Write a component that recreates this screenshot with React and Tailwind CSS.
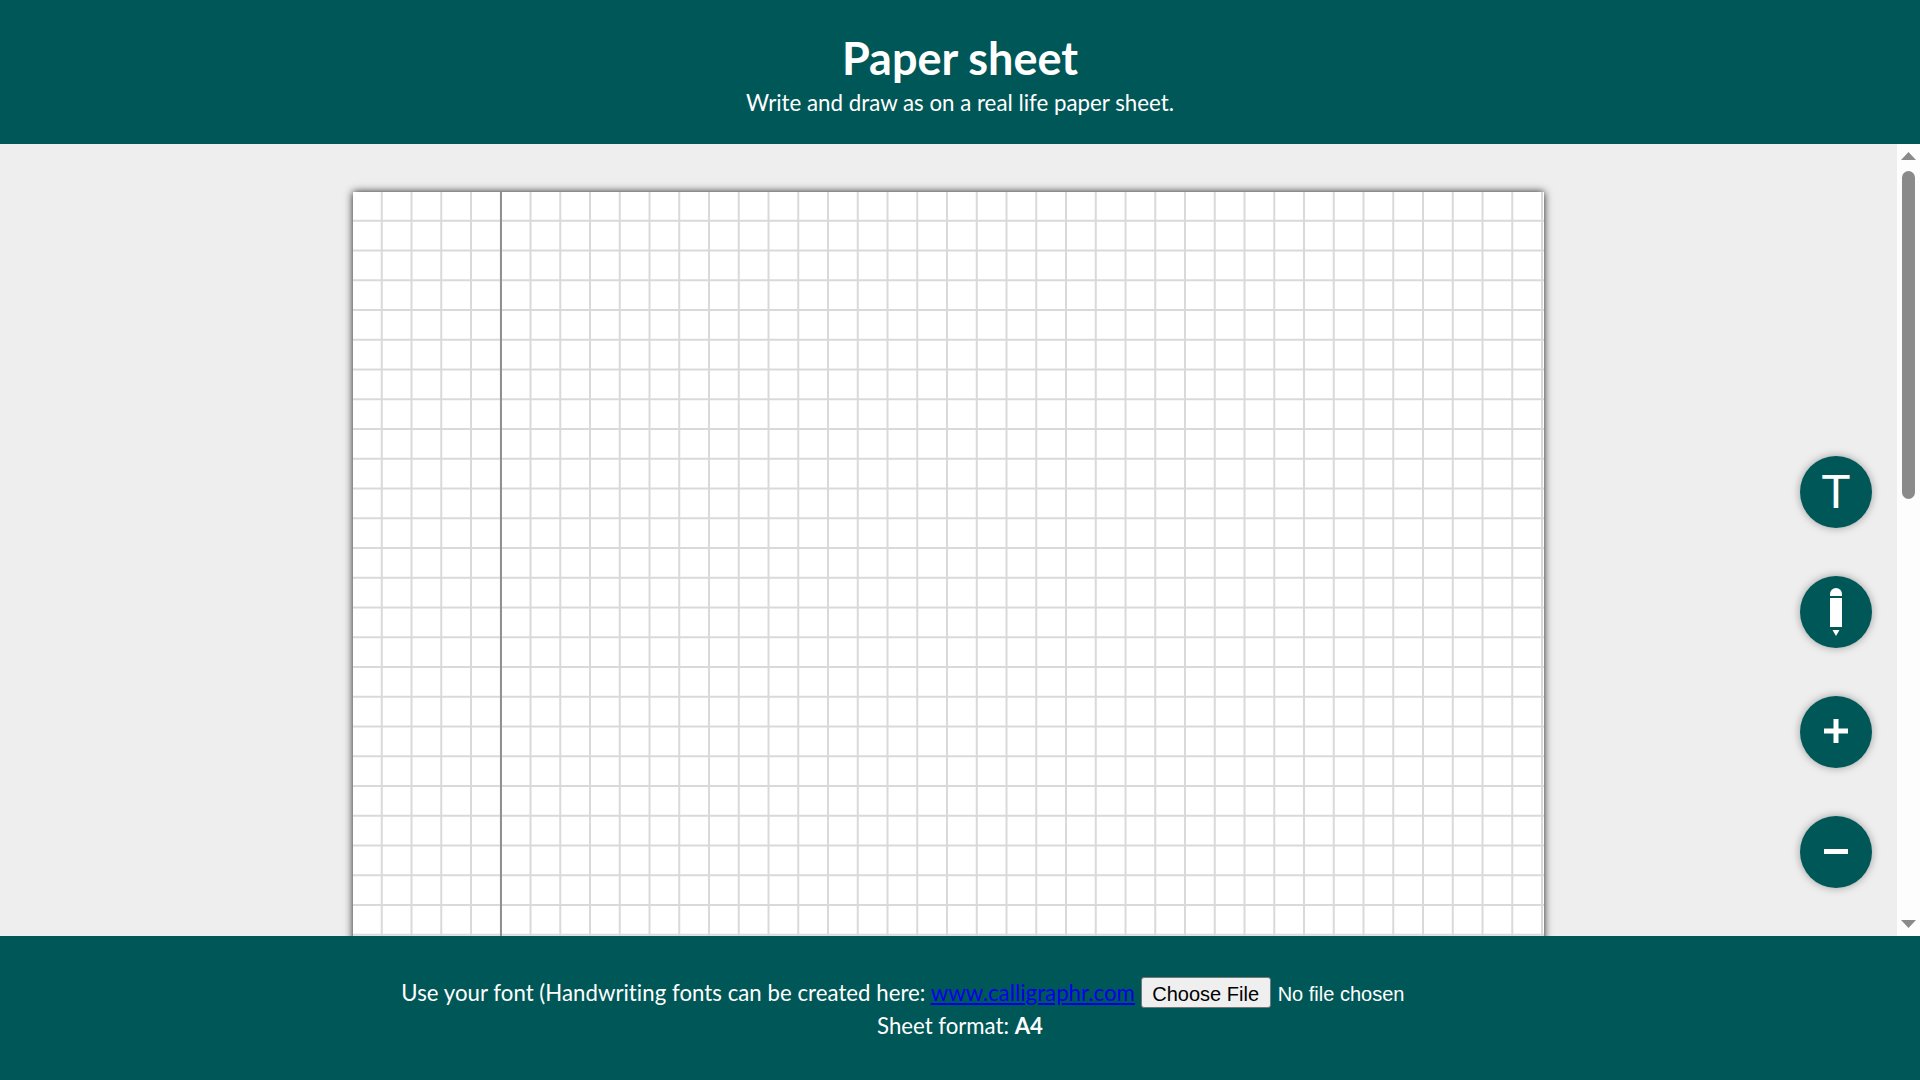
import React from "react";

function PencilIcon() {
  return (
    <svg width="14" height="48" viewBox="0 0 14 48" fill="white">
      <path d="M1 8V6a6 6 0 0 1 12 0v2z" />
      <rect x="1" y="10" width="12" height="29" />
      <path d="M3.500 42h7L7 48z" />
    </svg>
  );
}

function PlusIcon() {
  return (
    <svg className="-mt-[2px]" width="24" height="24" viewBox="0 0 24 24" fill="white">
      <path d="M9.500 0h5v9.500H24v5h-9.500V24h-5v-9.500H0v-5h9.500z" />
    </svg>
  );
}

function MinusIcon() {
  return (
    <svg className="-mt-[1px]" width="24" height="5" viewBox="0 0 24 5" fill="white">
      <rect width="24" height="5" />
    </svg>
  );
}

function RoundButton({ children }) {
  return (
    <button className="w-[72px] h-[72px] rounded-full bg-[#005757] flex items-center justify-center text-white shadow-[0_0_8px_rgba(0,0,0,0.35)]">
      {children}
    </button>
  );
}

export default function App() {
  return (
    <div className="h-screen flex flex-col overflow-hidden font-['Lato',sans-serif] text-white">
      {/* Header */}
      <header className="h-[144px] shrink-0 bg-[#005757] flex flex-col items-center pt-[32px]">
        <h1 className="text-[45px] leading-[52px] font-bold">Paper sheet</h1>
        <p className="text-[22.300px] leading-[38px]">Write and draw as on a real life paper sheet.</p>
      </header>

      {/* Sheet area */}
      <main className="flex-1 flex min-h-0 relative">
        <div className="flex-1 bg-[#eeeeee] overflow-hidden pt-[48px]">
          <div className="w-[1191px] h-[1683px] mx-auto flex bg-white shadow-[0_0_8px_rgba(0,0,0,0.9)] bg-[linear-gradient(to_right,transparent_27.750px,#d9d9d9_27.750px),linear-gradient(to_bottom,transparent_27.750px,#d9d9d9_27.750px)] bg-[size:29.750px_29.750px]">
            <div className="w-[149px] h-full border-r-2 border-[#909090]"></div>
          </div>
        </div>

        {/* Scrollbar */}
        <div className="w-[23px] bg-[#fdfdfd] flex flex-col items-center pt-[8px] pb-[8px]">
          <svg width="15" height="8" viewBox="0 0 15 8" fill="#8a8a8a">
            <path d="M7.500 0L15 8H0z" />
          </svg>
          <div className="w-[13px] h-[328px] mt-[11px] rounded-full bg-[#8a8a8a]"></div>
          <svg className="mt-auto" width="15" height="8" viewBox="0 0 15 8" fill="#8a8a8a">
            <path d="M0 0H15L7.500 8z" />
          </svg>
        </div>

        {/* Tool buttons */}
        <div className="absolute top-[312px] right-[48px] flex flex-col gap-[48px]">
          <RoundButton>
            <span className="font-['Liberation_Sans',sans-serif] text-[48px] leading-none">T</span>
          </RoundButton>
          <RoundButton>
            <PencilIcon />
          </RoundButton>
          <RoundButton>
            <PlusIcon />
          </RoundButton>
          <RoundButton>
            <MinusIcon />
          </RoundButton>
        </div>
      </main>

      {/* Footer */}
      <footer className="h-[144px] shrink-0 bg-[#005757] text-center pt-[40px] text-[22.200px] leading-[33px]">
        <div className="h-[33px] tracking-[0.040px]">
          Use your font (Handwriting fonts can be created here:{" "}
          <a href="#" className="text-[#0000ee] underline">www.calligraphr.com</a>{" "}
          <input
            type="file"
            className="inline-block w-[378px] h-[31px] mb-[6px] align-middle text-left tracking-normal font-['Liberation_Sans',sans-serif] text-[20px] file:h-[31px] file:w-[130px] file:mr-[7px] file:bg-[#efefef] file:text-black file:border file:border-[#767676] file:rounded-[3px]"
          />
        </div>
        <div>
          Sheet format: <b>A4</b>
        </div>
      </footer>
    </div>
  );
}
